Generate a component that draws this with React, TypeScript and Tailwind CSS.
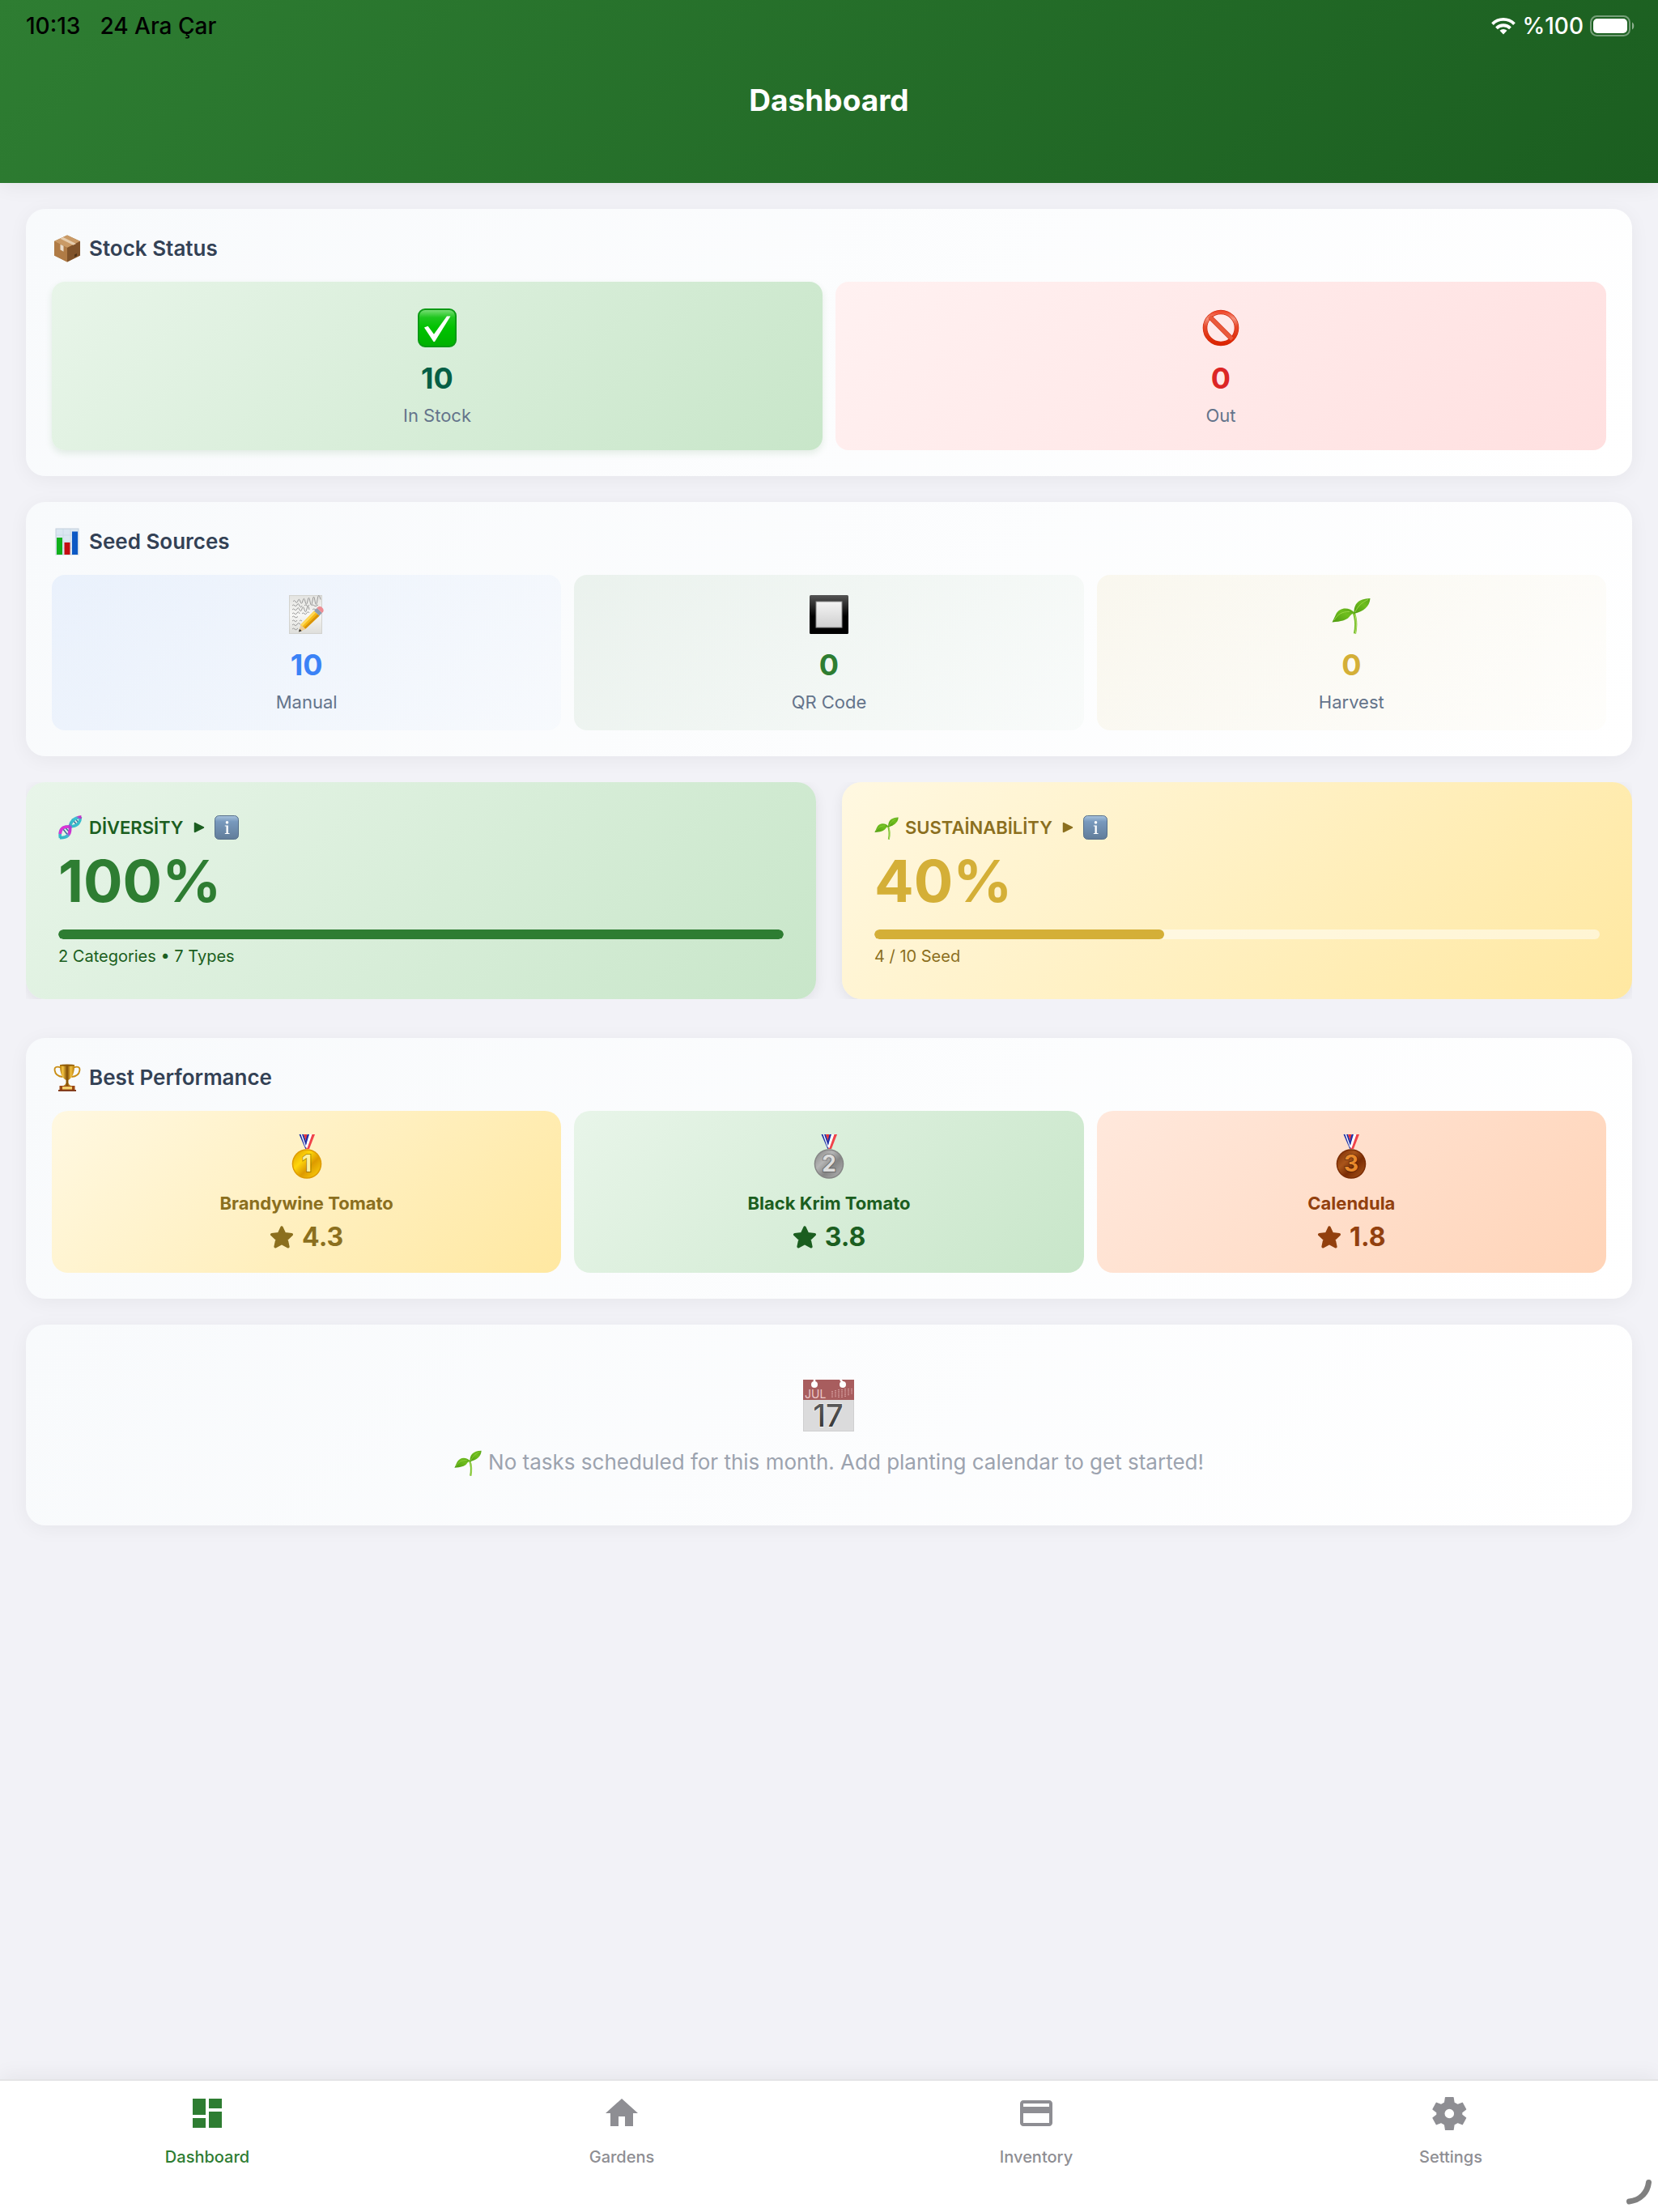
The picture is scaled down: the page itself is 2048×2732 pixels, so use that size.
import React from "react";
import { MdCreditCard, MdDashboard, MdHome } from "react-icons/md";

type IconProps = {
  className?: string;
};

/* ---------- emoji style icons ---------- */

function BoxIcon({ className }: IconProps) {
  return (
    <svg viewBox="0 0 34 34" className={className} aria-hidden="true">
      <path d="M17 .5 33 8v17.500L17 33.500 1 25.500V8z" fill="#a5713d" />
      <path d="M17 .5 33 8l-16 8L1 8z" fill="#c99a66" />
      <path d="M1 8l16 8v17.500L1 25.500z" fill="#b07b45" />
      <path d="M33 8l-16 8v17.500l16-8z" fill="#80532a" />
      <path d="M12 3l16 8-3.500 1.800-16-8z" fill="#e6cdae" />
      <path d="M8.500 11.800l4 2v7l-4-2.200z" fill="#e9dccb" />
      <path d="M26 24.500l3-1.500v3l-3 1.500z" fill="#4f3216" />
    </svg>
  );
}

function ChartIcon({ className }: IconProps) {
  return (
    <svg viewBox="0 0 34 34" className={className} aria-hidden="true">
      <rect x="3" y="1" width="28" height="32" fill="#dbe7f1" stroke="#c3d0db" />
      <path d="M3 9h28M3 17h28M3 25h28M12 1v32M21 1v32" stroke="#c4d4e2" strokeWidth=".6" />
      <rect x="4" y="12" width="7" height="21" fill="#10b01c" />
      <rect x="13.500" y="18" width="7" height="15" fill="#c40d12" />
      <rect x="23" y="4.500" width="7" height="28.500" fill="#0b58c4" />
    </svg>
  );
}

function TrophyIcon({ className }: IconProps) {
  return (
    <svg viewBox="0 0 34 34" className={className} aria-hidden="true">
      <defs>
        <linearGradient id="cup" x1="0" x2="1">
          <stop offset="0" stopColor="#b57a08" />
          <stop offset=".2" stopColor="#f5c542" />
          <stop offset=".5" stopColor="#7d4a04" />
          <stop offset=".75" stopColor="#f0bd3c" />
          <stop offset="1" stopColor="#b57a08" />
        </linearGradient>
      </defs>
      <path
        d="M9 4.500C4 2.500 1 4 1.600 8c.6 4.500 4.400 7.500 10 8M25 4.500c5-2 8-.5 7.400 3.500-.6 4.500-4.400 7.500-10 8"
        fill="none"
        stroke="#c98d14"
        strokeWidth="1.800"
      />
      <path d="M8 1h18c.4 9-2.500 16.500-7.500 19v3.500c.5 2 2 2.500 3 3.500h-9c1-1 2.500-1.500 3-3.500V20C10.500 17.500 7.600 10 8 1z" fill="url(#cup)" />
      <ellipse cx="17" cy="1.600" rx="9" ry="1.200" fill="#8f5a06" />
      <path d="M7.500 27h19v6h-19z" fill="#9c4a14" />
      <path d="M11 28h12v3.500H11z" fill="#f2d06b" />
      <path d="M6 32h22v1.800H6z" fill="#7a2d0a" />
    </svg>
  );
}

function CheckIcon({ className }: IconProps) {
  return (
    <svg viewBox="0 0 48 48" className={className} aria-hidden="true">
      <defs>
        <linearGradient id="check" x1="0" y1="0" x2="0" y2="1">
          <stop offset="0" stopColor="#7fe07c" />
          <stop offset=".22" stopColor="#1fc61f" />
          <stop offset=".5" stopColor="#00c200" />
          <stop offset="1" stopColor="#00b000" />
        </linearGradient>
      </defs>
      <rect x="1" y="1" width="46" height="46" rx="8" fill="url(#check)" stroke="#0b9a14" strokeWidth="2" />
      <path d="M8 23.500l4.600-1.800 7.400 10L36 9.500h4.500L21 41h-1.500z" fill="#fff" />
    </svg>
  );
}

function NoEntryIcon({ className }: IconProps) {
  return (
    <svg viewBox="0 0 48 48" className={className} aria-hidden="true">
      <defs>
        <linearGradient id="ban" x1="0" y1="0" x2="0" y2="1">
          <stop offset="0" stopColor="#f0492c" />
          <stop offset=".2" stopColor="#f4917c" />
          <stop offset=".45" stopColor="#e84a2c" />
          <stop offset="1" stopColor="#dc2400" />
        </linearGradient>
      </defs>
      <circle cx="24" cy="24" r="19.500" fill="none" stroke="#d12a0c" strokeWidth="5.600" />
      <circle cx="24" cy="24" r="19.500" fill="none" stroke="url(#ban)" strokeWidth="4.200" />
      <path d="M11 11l26 26" stroke="#d12a0c" strokeWidth="6" />
      <path d="M10 10l28 28" stroke="#ea5a3c" strokeWidth="4.600" />
    </svg>
  );
}

function MemoIcon({ className }: IconProps) {
  return (
    <svg viewBox="0 0 48 48" className={className} aria-hidden="true">
      <defs>
        <linearGradient id="paper" x1="0" y1="0" x2="0" y2="1">
          <stop offset="0" stopColor="#e3e3e0" />
          <stop offset=".5" stopColor="#f7f7f5" />
          <stop offset="1" stopColor="#dededb" />
        </linearGradient>
      </defs>
      <rect x="2.500" y=".5" width="40" height="47" fill="url(#paper)" stroke="#d3d3cf" />
      <g fill="none" stroke="#9a9a9a" strokeWidth="1">
        <path d="M7 8q1.500-3 3 0t3-1 3 1 3-1 3 1 3-1 3 1 3-1 3 0 3-1 4-.5" />
        <path d="M6 13q1.500-2 3 0t3-1 3 1 3 0M21 13q1.500-2 3 0t3-1M30 13q1.500-2 3 0t5-1" />
        <path d="M6 18q1.500-2 3 0t3-1 3 1 3-1 3 1 3-1 3 1M31 18q1.500-2 4 0" />
        <path d="M6 23q1.500-2 3 0t3-1 3 1M18 23q1.500-2 3 0t3-1 3 0" />
        <path d="M6 27q1.500-2 3 0t4-.5" />
        <path d="M6 32q1.500-2 3 0t3-1M15 32q1.500-2 3 0" />
        <path d="M6 37q1.500-2 3 0t3-1 4 0" />
        <path d="M6 42q1.500-2 3 0t4-1" />
      </g>
      <path d="M15 45l1.500-8.500L33 19.500l6.500 6L22.500 41.500z" fill="#f5b915" />
      <path d="M16.500 36.500L33 19.500l2.200 2L18.500 38.500z" fill="#ffd95a" />
      <path d="M20.500 40L37.300 23.500l2.200 2L22.500 41.500z" fill="#d8930a" />
      <path d="M14 45.500l2.500-9 6 5.500z" fill="#eccb96" />
      <path d="M14 45.500l1-3.800 2.700 2.500z" fill="#2f2f2f" />
      <path d="M33 19.500l3.500-3.500 6.300 6-3.300 3.500z" fill="#8d9db0" />
      <path d="M36.500 16c2-2.500 4.500-2.500 6.500-.5s2.500 4.500-.2 6.500z" fill="#ee8c93" />
    </svg>
  );
}

function SquareButtonIcon({ className }: IconProps) {
  return (
    <svg viewBox="0 0 48 48" className={className} aria-hidden="true">
      <defs>
        <linearGradient id="frame" x1="0" y1="0" x2="0" y2="1">
          <stop offset="0" stopColor="#555" />
          <stop offset=".55" stopColor="#000" />
        </linearGradient>
        <linearGradient id="pane" x1="0" y1="0" x2="0" y2="1">
          <stop offset="0" stopColor="#f4f4f4" />
          <stop offset="1" stopColor="#cfcfcf" />
        </linearGradient>
      </defs>
      <rect width="48" height="48" rx="1.500" fill="url(#frame)" />
      <rect x="8" y="8" width="32" height="32" fill="url(#pane)" stroke="#8a8a8a" />
    </svg>
  );
}

function SproutIcon({ className }: IconProps) {
  return (
    <svg viewBox="0 0 48 48" className={className} aria-hidden="true">
      <defs>
        <linearGradient id="leaf" x1="0" y1="1" x2="1" y2="0">
          <stop offset="0" stopColor="#4d9a10" />
          <stop offset=".6" stopColor="#6fbe1e" />
          <stop offset="1" stopColor="#58a517" />
        </linearGradient>
      </defs>
      <path d="M27 21c3 8 3.500 17 1.500 26.500" fill="none" stroke="#79bf2c" strokeWidth="3.200" />
      <path d="M28.800 24c2 8 2 16 .5 23" fill="none" stroke="#b6e06f" strokeWidth="1" />
      <path d="M27.500 23c-.5-12 5-18.500 20-19-.8 10.500-8 16-20 19z" fill="url(#leaf)" />
      <path d="M28.500 22C21 14 10 15 5.500 23 3.500 27 2.500 30 .5 33.500 12 32.500 18 31 21.500 27c2-2.500 3.500-4.500 7-5z" fill="url(#leaf)" />
      <path d="M3 31c4-7 10-11 19-10.500M29 21c3-7 8-12 16-15.500" fill="none" stroke="#9ed84b" strokeWidth=".9" />
    </svg>
  );
}

function DnaIcon({ className }: IconProps) {
  return (
    <svg viewBox="0 0 30 30" className={className} aria-hidden="true">
      <defs>
        <linearGradient id="strand" gradientUnits="userSpaceOnUse" x1="3" y1="28" x2="27" y2="3">
          <stop offset="0" stopColor="#2fb4c4" />
          <stop offset=".22" stopColor="#3fb9cf" />
          <stop offset=".34" stopColor="#d92fd2" />
          <stop offset=".52" stopColor="#b13bd0" />
          <stop offset=".6" stopColor="#33b6c8" />
          <stop offset=".9" stopColor="#3cc4d2" />
          <stop offset="1" stopColor="#c335c6" />
        </linearGradient>
      </defs>
      <g fill="none">
        <path d="M5.500 16.500l6 7.500M17 4.500l6 7.500M9 15.500l4.500 5M21 4l4 5" stroke="#3f6f9f" strokeWidth="1.600" />
        <path d="M2.500 28C1 19.500 4 14 11.500 14S27 13 27.500 2" stroke="#38bccb" strokeWidth="3.600" />
        <path d="M2.300 23C2.500 17.500 5.500 14 11.500 14c2 0 3.500 0 5-.5" stroke="#dc34d4" strokeWidth="3.600" />
        <path d="M2 27.500C10 28 15 24.500 14.500 16.500S19 3 28.500 2" stroke="url(#strand)" strokeWidth="3.800" />
      </g>
    </svg>
  );
}

function InfoIcon({ className }: IconProps) {
  return (
    <svg viewBox="0 0 30 30" className={className} aria-hidden="true">
      <defs>
        <linearGradient id="info" x1="0" y1="0" x2="0" y2="1">
          <stop offset="0" stopColor="#a9c4de" />
          <stop offset=".25" stopColor="#7899bd" />
          <stop offset="1" stopColor="#617c99" />
        </linearGradient>
      </defs>
      <rect x=".5" y=".5" width="29" height="29" rx="5" fill="url(#info)" stroke="#57708a" />
      <circle cx="15.500" cy="8.800" r="1.800" fill="#fff" />
      <path d="M12.800 12.500h4v9.500h1.700v1h-5.700v-1h1.700v-8.500h-1.700z" fill="#fff" />
    </svg>
  );
}

type MedalProps = IconProps & {
  place: string;
  light: string;
  dark: string;
  digit: string;
};

function MedalIcon({ className, place, light, dark, digit }: MedalProps) {
  return (
    <svg viewBox="0 0 40 56" className={className} aria-hidden="true">
      <defs>
        <linearGradient id={"medal" + place} x1="0" y1="0" x2="1" y2="1">
          <stop offset="0" stopColor={dark} />
          <stop offset=".35" stopColor={light} />
          <stop offset=".6" stopColor={dark} />
          <stop offset="1" stopColor={light} />
        </linearGradient>
      </defs>
      <path d="M10.500 1h5.500l5 14-2.500 4.500z" fill="#1d2fa5" />
      <path d="M12.500 1h1.500l5 14.500-.8 1.500z" fill="#fff" />
      <path d="M16 1h4l1.500 7-1.200 5z" fill="#e8363b" />
      <path d="M24.500 1h5.500l-7 18h-4z" fill="#f0434a" />
      <path d="M21.500 1h5l-6 17-2-1z" fill="#fff" />
      <path d="M20.500 1h2.500l-4 13-1-3z" fill="#1d2fa5" />
      <circle cx="20" cy="37.500" r="18.300" fill={dark} />
      <circle cx="20" cy="37.500" r="16.800" fill={"url(#medal" + place + ")"} />
      <text
        x="20"
        y="47"
        textAnchor="middle"
        fontFamily="Inter, sans-serif"
        fontWeight="700"
        fontSize="28"
        fill={digit}
        stroke="#000"
        strokeOpacity=".3"
        strokeWidth="2"
        paintOrder="stroke"
      >
        {place}
      </text>
    </svg>
  );
}

function CalendarIcon({ className }: IconProps) {
  return (
    <svg viewBox="0 0 64 64" overflow="visible" className={className} aria-hidden="true">
      <defs>
        <linearGradient id="day" x1="0" y1="0" x2="0" y2="1">
          <stop offset="0" stopColor="#666" />
          <stop offset="1" stopColor="#2e2e2e" />
        </linearGradient>
      </defs>
      <rect x=".5" y=".5" width="62" height="63" fill="#dbdbdc" stroke="#cfcfd0" />
      <rect width="63" height="25" fill="#a85d5e" />
      <path d="M14 0v5M46 0l3.500 4" stroke="#fff" strokeWidth="2.500" />
      <circle cx="14" cy="6" r="4" fill="#fff" />
      <circle cx="49" cy="6" r="4" fill="#fff" />
      <path
        d="M36 14v8M40 13v9M44 12v10M48 12v10M52 11v10M56 11v9M60 11v7"
        stroke="#d9a5a5"
        strokeWidth="1.600"
        strokeDasharray="1.200 1"
      />
      <text x="2" y="22.500" fontFamily="Inter, sans-serif" fontSize="14" fill="#ecc9c9">
        JUL
      </text>
      <text
        x="31"
        y="57.500"
        textAnchor="middle"
        fontFamily="Inter, sans-serif"
        fontWeight="500"
        fontSize="38"
        fill="url(#day)"
        stroke="#fff"
        strokeWidth="1"
        paintOrder="stroke"
      >
        17
      </text>
    </svg>
  );
}

function StarIcon({ className }: IconProps) {
  return (
    <svg viewBox="0 0 30 28" className={className} aria-hidden="true">
      <path
        d="M15 2.200l3.500 7.600 8.700.9-6.300 6 1.900 9L15 21.500l-7.800 4.200 1.900-9-6.300-6 8.700-.9z"
        fill="currentColor"
        stroke="currentColor"
        strokeWidth="3.600"
        strokeLinejoin="round"
      />
    </svg>
  );
}

function PlayIcon({ className }: IconProps) {
  return (
    <svg viewBox="0 0 14 14" className={className} aria-hidden="true">
      <path d="M1.500 1.500v11L12.500 7z" fill="currentColor" stroke="currentColor" strokeWidth="1.500" strokeLinejoin="round" />
    </svg>
  );
}

function GearIcon({ size }: { size: number }) {
  return (
    <svg viewBox="0 0 48 48" width={size} height={size} aria-hidden="true">
      <path
        fillRule="evenodd"
        d="M17.600 4.700h9.400l1 6.300 4.500 2.600 5.800-2.300 4.200 7.800-4.900 3.900v3l4.900 3.900-4.200 7.800-5.800-2.300L28 38l-1 6.300h-9.400l-1-6.300-4.500-2.600-5.800 2.300-4.200-7.800L7 26v-3l-4.900-3.900 4.200-7.800 5.800 2.300 4.500-2.600zM22.300 18a6.500 6.500 0 1 0 0 13 6.500 6.500 0 0 0 0-13z"
        fill="currentColor"
        stroke="currentColor"
        strokeWidth="1.400"
        strokeLinejoin="round"
      />
    </svg>
  );
}

/* ---------- status bar ---------- */

function WifiIcon({ className }: IconProps) {
  return (
    <svg viewBox="0 0 30 21" className={className} aria-hidden="true">
      <g fill="none" stroke="#fff" strokeWidth="3.800">
        <path d="M1.500 7.600a19 19 0 0 1 27 0" />
        <path d="M6.500 12.800a12 12 0 0 1 17 0" />
      </g>
      <path d="M10.500 15.800a6.500 6.500 0 0 1 9 0L15 20.500z" fill="#fff" />
    </svg>
  );
}

function BatteryIcon({ className }: IconProps) {
  return (
    <svg viewBox="0 0 56 26" className={className} aria-hidden="true">
      <rect x="1" y="1" width="48" height="24" rx="7.500" fill="none" stroke="#fff" strokeOpacity=".4" strokeWidth="2" />
      <rect x="4" y="4" width="42" height="18" rx="5" fill="#fff" />
      <path d="M52 8.500c3 1 3 8 0 9z" fill="#fff" fillOpacity=".5" />
    </svg>
  );
}

function Header() {
  return (
    <header className="relative bg-[linear-gradient(135deg,#2e7d32,#1b5e20)] pb-[78px] shadow-[0_4px_24px_rgba(0,0,0,0.06)]">
      <div className="flex h-16 items-center justify-between pr-7 pl-8">
        <div className="flex gap-6 text-[28px] font-medium text-black">
          <span>10:13</span>
          <span>24 Ara Çar</span>
        </div>
        <div className="flex items-center gap-2 text-[28px] font-medium text-white">
          <WifiIcon className="h-[21px] w-[30px]" />
          <span>%100</span>
          <BatteryIcon className="h-[26px] w-14" />
        </div>
      </div>
      <h1 className="mt-9 text-center text-[37px] leading-[48px] font-bold text-white">
        Dashboard
      </h1>
    </header>
  );
}

/* ---------- cards ---------- */

const CARD =
  "rounded-3xl bg-[linear-gradient(135deg,#f8fafc,#ffffff)] shadow-[0_4px_24px_rgba(0,0,0,0.05)]";

type SectionProps = {
  title: string;
  icon: React.ReactNode;
  className?: string;
  children: React.ReactNode;
};

function Section({ title, icon, className = "", children }: SectionProps) {
  return (
    <section className={`${CARD} p-8 ${className}`}>
      <h2 className="mb-6 flex items-center gap-2.5 pl-0.5 text-[26px] leading-[34px] font-semibold text-[#334155]">
        {icon}
        {title}
      </h2>
      {children}
    </section>
  );
}

type TileProps = {
  icon: React.ReactNode;
  value: number;
  label: string;
  color: string;
  className: string;
};

function Tile({ icon, value, label, color, className }: TileProps) {
  return (
    <div className={`flex flex-col items-center rounded-2xl ${className}`}>
      {icon}
      <p className={`mt-4 text-[36px] leading-[44px] font-bold ${color}`}>{value}</p>
      <p className="mt-2.5 text-[22px] leading-7 text-[#64748b]">{label}</p>
    </div>
  );
}

type ScoreProps = {
  icon: React.ReactNode;
  title: string;
  percent: number;
  detail: string;
  bg: string;
  text: string;
  value: string;
  bar: string;
};

function ScoreCard({ icon, title, percent, detail, bg, text, value, bar }: ScoreProps) {
  return (
    <section className={`rounded-3xl p-10 shadow-[0_4px_16px_rgba(0,0,0,0.08)] ${bg} ${text}`}>
      <div className="flex h-8 items-center gap-2">
        {icon}
        <h2 className="text-[22px] font-semibold">{title}</h2>
        <PlayIcon className="mx-1 size-3.5" />
        <button type="button" aria-label={"About " + title} className="cursor-pointer">
          <InfoIcon className="size-[30px]" />
        </button>
      </div>
      <p className={`mt-2.5 text-[72px] leading-[80px] font-bold ${value}`}>{percent}%</p>
      <div
        role="progressbar"
        aria-label={title}
        aria-valuenow={percent}
        className="mt-5 h-3 overflow-hidden rounded-full bg-white/50"
      >
        <div className={`h-full rounded-full ${bar}`} style={{ width: `${percent}%` }} />
      </div>
      <p className="mt-2 text-[20px] leading-[26px]">{detail}</p>
    </section>
  );
}

const performers = [
  {
    name: "Brandywine Tomato",
    rating: "4.3",
    className: "bg-[linear-gradient(135deg,#fff8e1,#ffe8a1)] text-[#8b6f1e]",
    medal: { place: "1", light: "#ffd60a", dark: "#dd9a00", digit: "#fff0a0" },
  },
  {
    name: "Black Krim Tomato",
    rating: "3.8",
    className: "bg-[linear-gradient(135deg,#e8f5e9,#c8e6c9)] text-[#1b5e20]",
    medal: { place: "2", light: "#b5b5b5", dark: "#858585", digit: "#dedede" },
  },
  {
    name: "Calendula",
    rating: "1.8",
    className: "bg-[linear-gradient(135deg,#ffe8dc,#ffd4b8)] text-[#92400e]",
    medal: { place: "3", light: "#a9551a", dark: "#7a2c04", digit: "#e8892b" },
  },
];

/* ---------- bottom navigation ---------- */

const tabs = [
  { name: "Dashboard", Icon: MdDashboard, active: true },
  { name: "Gardens", Icon: MdHome, active: false },
  { name: "Inventory", Icon: MdCreditCard, active: false },
  { name: "Settings", Icon: GearIcon, active: false },
];

function BottomNav() {
  return (
    <nav className="relative grid grid-cols-4 border-t-2 border-[#e4e4e6] bg-white pt-4 pb-[54px] shadow-[0_-4px_24px_rgba(0,0,0,0.06)]">
      {tabs.map(({ name, Icon, active }) => (
        <a
          key={name}
          href={"#" + name.toLowerCase()}
          className={`flex flex-col items-center gap-4 text-[20px] leading-7 font-medium ${
            active ? "text-[#2e7d32]" : "text-[#8e8e93]"
          }`}
        >
          <Icon size={48} />
          {name}
        </a>
      ))}
      <svg viewBox="0 0 34 34" className="absolute right-[7px] bottom-2 size-[34px]" aria-hidden="true">
        <path d="M29.500 5.500C28 18 19 27.500 5.500 29" fill="none" stroke="#808080" strokeWidth="7" strokeLinecap="round" />
      </svg>
    </nav>
  );
}

export default function App() {
  return (
    <div className="flex min-h-screen flex-col bg-[#f2f2f7] font-['Inter',sans-serif]">
      <Header />
      <main className="flex flex-1 flex-col gap-8 p-8">
        <Section title="Stock Status" icon={<BoxIcon className="size-[34px]" />}>
          <div className="grid grid-cols-2 gap-4">
            <Tile
              icon={<CheckIcon className="size-12" />}
              value={10}
              label="In Stock"
              color="text-[#065f46]"
              className="bg-[linear-gradient(135deg,#e8f5e9,#c8e6c9)] pt-[33px] pb-[29px] shadow-[0_4px_8px_rgba(46,125,50,0.12)]"
            />
            <Tile
              icon={<NoEntryIcon className="size-12" />}
              value={0}
              label="Out"
              color="text-[#dc2626]"
              className="bg-[linear-gradient(135deg,#fff1f1,#ffe0e0)] pt-[33px] pb-[29px]"
            />
          </div>
        </Section>

        <Section title="Seed Sources" icon={<ChartIcon className="size-[34px]" />}>
          <div className="grid grid-cols-3 gap-4">
            <Tile
              icon={<MemoIcon className="size-12" />}
              value={10}
              label="Manual"
              color="text-[#3b82f6]"
              className="bg-[linear-gradient(135deg,rgba(59,130,246,0.08),rgba(59,130,246,0.02))] pt-[25px] pb-[21px]"
            />
            <Tile
              icon={<SquareButtonIcon className="size-12" />}
              value={0}
              label="QR Code"
              color="text-[#2e7d32]"
              className="bg-[linear-gradient(135deg,rgba(46,125,50,0.08),rgba(46,125,50,0.02))] pt-[25px] pb-[21px]"
            />
            <Tile
              icon={<SproutIcon className="size-12" />}
              value={0}
              label="Harvest"
              color="text-[#d4af37]"
              className="bg-[linear-gradient(135deg,rgba(212,175,55,0.08),rgba(212,175,55,0.02))] pt-[25px] pb-[21px]"
            />
          </div>
        </Section>

        <div className="grid grid-cols-2 gap-8 overflow-hidden">
          <ScoreCard
            icon={<DnaIcon className="size-[30px]" />}
            title="DİVERSİTY"
            percent={100}
            detail="2 Categories • 7 Types"
            bg="bg-[linear-gradient(135deg,#e8f5e9,#c8e6c9)]"
            text="text-[#1b5e20]"
            value="text-[#2e7d32]"
            bar="bg-[#2e7d32]"
          />
          <ScoreCard
            icon={<SproutIcon className="size-[30px]" />}
            title="SUSTAİNABİLİTY"
            percent={40}
            detail="4 / 10 Seed"
            bg="bg-[linear-gradient(135deg,#fff8e1,#ffe8a1)]"
            text="text-[#8b6f1e]"
            value="text-[#d4af37]"
            bar="bg-[#d4af37]"
          />
        </div>

        <Section title="Best Performance" icon={<TrophyIcon className="size-[34px]" />} className="mt-4">
          <div className="grid grid-cols-3 gap-4">
            {performers.map(({ name, rating, className, medal }) => (
              <div
                key={name}
                className={`flex flex-col items-center rounded-[20px] pt-7 pb-6 ${className}`}
              >
                <MedalIcon className="h-14 w-10" {...medal} />
                <p className="mt-4 text-[22px] leading-7 font-bold">{name}</p>
                <p className="mt-2 flex items-center gap-2.5 text-[32px] leading-10 font-bold">
                  <StarIcon className="h-7 w-[30px]" />
                  {rating}
                </p>
              </div>
            ))}
          </div>
        </Section>

        <section className={`${CARD} flex flex-col items-center pt-17 pb-15`}>
          <CalendarIcon className="size-16" />
          <p className="mt-5 flex items-center gap-2 text-[26px] leading-9 text-[#9ca3af]">
            <SproutIcon className="size-[34px]" />
            No tasks scheduled for this month. Add planting calendar to get started!
          </p>
        </section>
      </main>
      <BottomNav />
    </div>
  );
}
